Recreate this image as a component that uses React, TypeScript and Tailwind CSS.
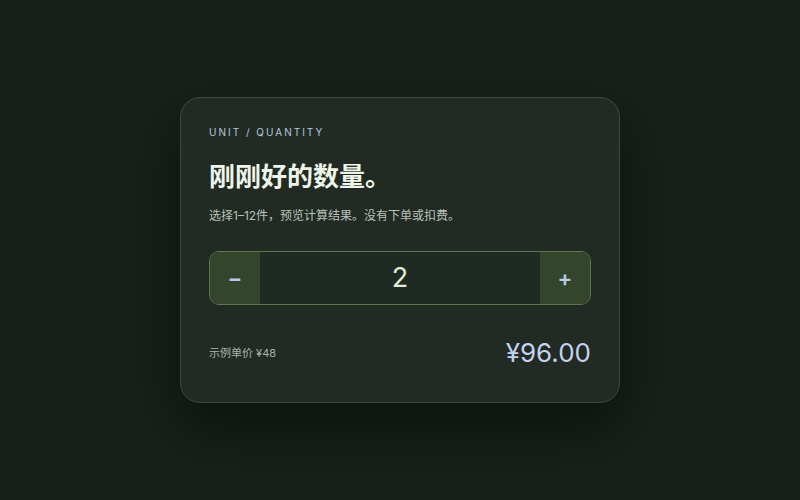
import { useState } from 'react'

const UNIT_PRICE = 48

export default function App() {
  const [qty, setQty] = useState(2)

  const dec = () => setQty((q) => Math.max(1, q - 1))
  const inc = () => setQty((q) => Math.min(12, q + 1))

  return (
    <div
      className="flex h-[500px] w-[800px] items-center justify-center bg-[#17201a]"
      style={{ fontFamily: 'Inter, "Noto Sans CJK SC", sans-serif' }}
    >
      <div className="w-[440px] rounded-[20px] border border-[#3d4a3f] bg-[#222a24] px-[28px] pt-[27px] pb-[33px] shadow-[0_24px_60px_rgba(0,0,0,0.45)]">
        {/* 标题区 */}
        <div className="text-[10px] leading-[14px] tracking-[0.2em] text-[#b7c5dd]">
          UNIT / QUANTITY
        </div>
        <h1 className="mt-[21px] text-[26px] leading-[34px] font-bold text-[#eef4e8]">
          刚刚好的数量。
        </h1>
        <p className="mt-[13px] text-[12px] leading-[18px] text-[#b9c2b8]">
          选择1–12件，预览计算结果。没有下单或扣费。
        </p>

        {/* 数量选择 */}
        <div className="mt-[26px] flex h-[54px] overflow-hidden rounded-[10px] border border-[#5c7650] bg-[#1f2a22]">
          <button
            onClick={dec}
            className="flex w-[50px] items-center justify-center bg-[#33462c] text-[22px] font-semibold text-[#b9c9e6]"
          >
            −
          </button>
          <div className="flex flex-1 items-center justify-center text-[27px] text-[#e2eed5]">
            {qty}
          </div>
          <button
            onClick={inc}
            className="flex w-[50px] items-center justify-center bg-[#33462c] text-[22px] font-semibold text-[#b9c9e6]"
          >
            +
          </button>
        </div>

        {/* 合计 */}
        <div className="mt-[32px] flex items-center justify-between">
          <span className="text-[11px] text-[#aab3a9]">示例单价 ¥{UNIT_PRICE}</span>
          <span className="text-[26px] leading-[32px] text-[#c3d2ee]">
            ¥{(qty * UNIT_PRICE).toFixed(2)}
          </span>
        </div>
      </div>
    </div>
  )
}
